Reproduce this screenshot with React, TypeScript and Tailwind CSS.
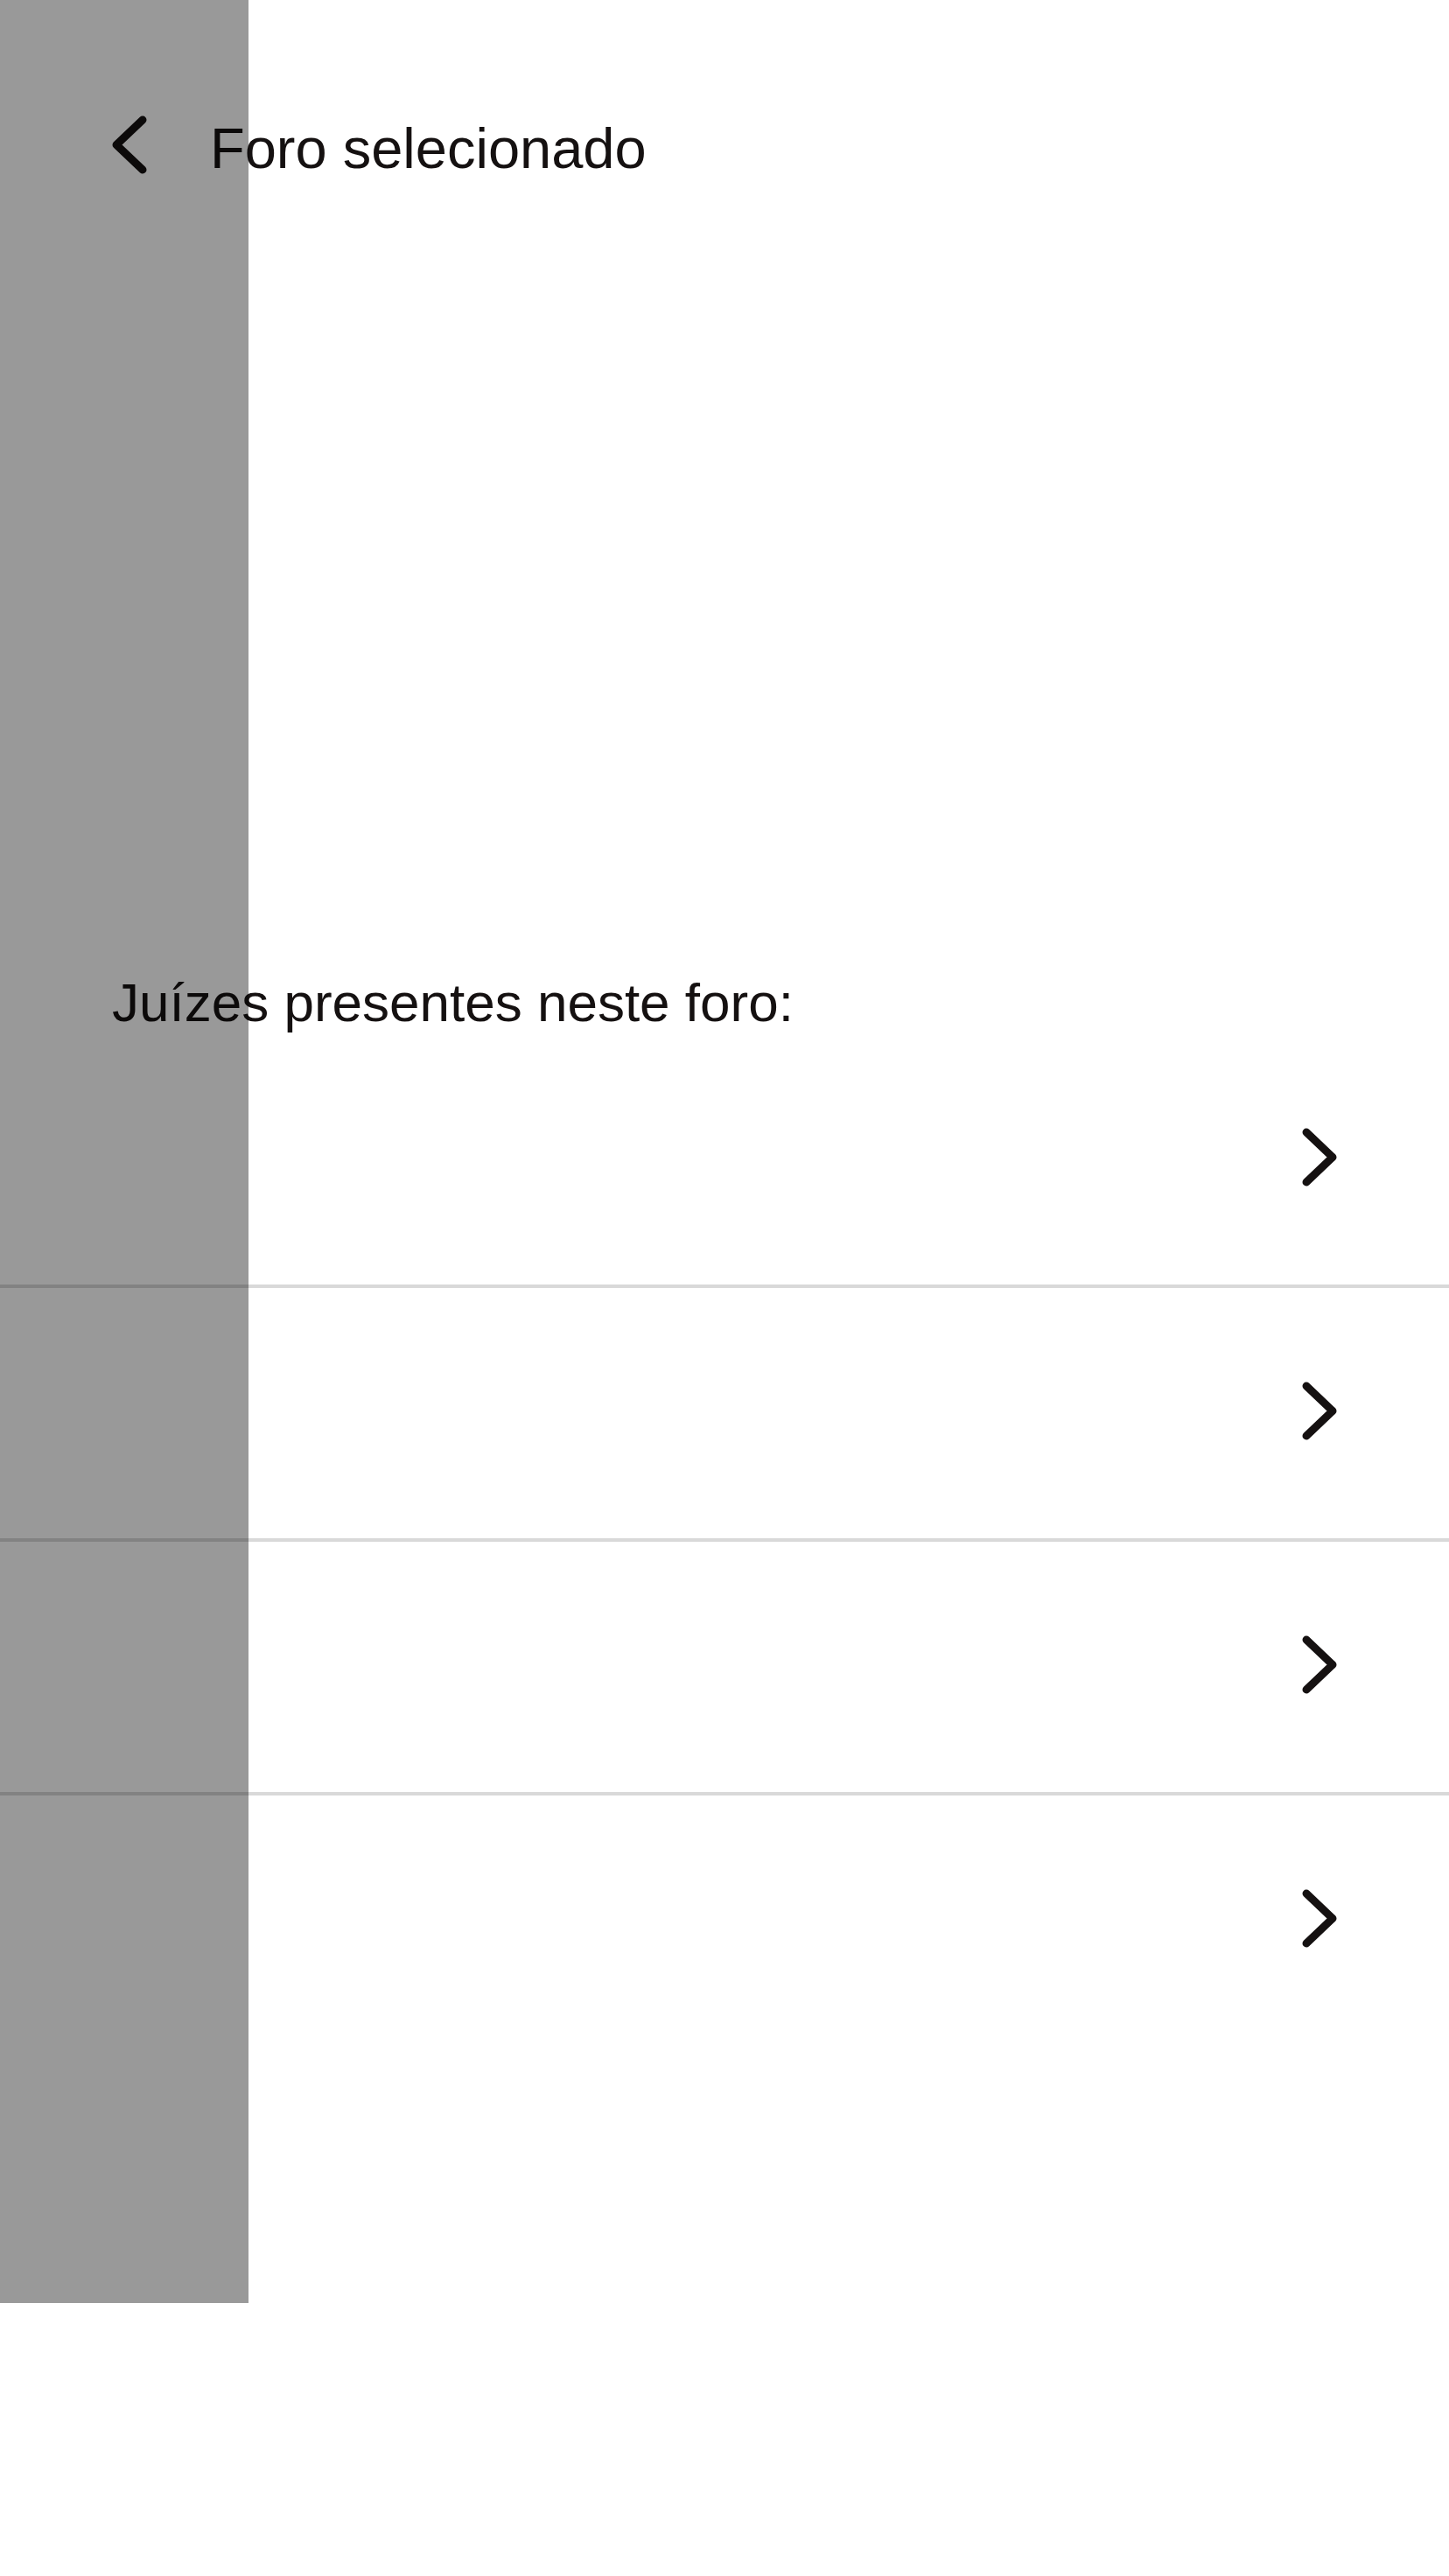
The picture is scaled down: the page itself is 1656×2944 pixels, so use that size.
import React from "react"

const judges = [1, 2, 3, 4]

function Chevron({ dir = "right" }: { dir?: "left" | "right" }) {
  const d = dir === "right" ? "M5 5 L35 33.5 L5 62" : "M35 5 L5 33.5 L35 62"
  return (
    <svg width="40" height="67" viewBox="0 0 40 67" fill="none" className="shrink-0">
      <path d={d} stroke="#151111" strokeWidth="9" strokeLinecap="round" strokeLinejoin="round" />
    </svg>
  )
}

export default function App() {
  return (
    <div
      className="relative min-h-[2944px] w-full bg-white text-[#151111]"
      style={{ fontFamily: '"Liberation Sans", Arial, sans-serif' }}
    >
      {/* header */}
      <header className="flex items-start pl-[128px] pt-[132px]">
        <button className="flex">
          <Chevron dir="left" />
        </button>
        <h1 className="ml-[72px] mt-[5px] text-[65px] leading-none font-normal">Foro selecionado</h1>
      </header>

      {/* judges list */}
      <section className="mt-[913px]">
        <p className="pl-[128px] text-[62px] leading-none">Juízes presentes neste foro:</p>
        <ul className="mt-[5px]">
          {judges.map((j, i) => (
            <li
              key={j}
              className={
                i < judges.length - 1
                  ? "flex h-[290px] items-center justify-end border-b-4 border-[#d9d9d9] pr-[128px] pb-[6px]"
                  : "flex h-[286px] items-center justify-end pr-[128px] pb-[6px]"
              }
            >
              <Chevron />
            </li>
          ))}
        </ul>
      </section>

      {/* dim overlay on the left edge */}
      <div className="pointer-events-none absolute left-0 top-0 h-[2632px] w-[284px] bg-black/40" />
    </div>
  )
}
